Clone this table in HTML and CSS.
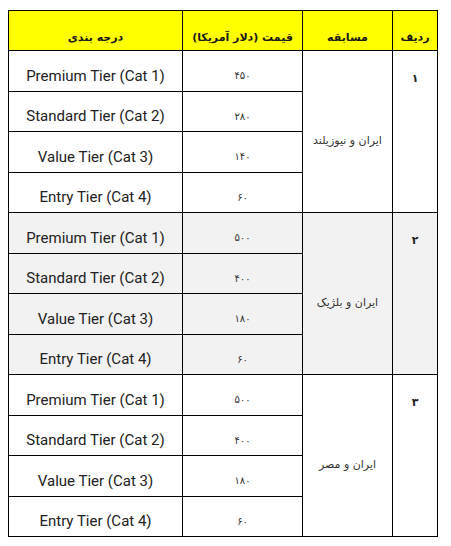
FILE: index.html
```html
<!DOCTYPE html>
<html lang="fa" dir="rtl">
<head>
<meta charset="utf-8">
<title>جدول قیمت بلیت</title>
<link rel="stylesheet" href="styles.css">
</head>
<body>
<table class="prices">
  <colgroup>
    <col class="c-row">
    <col class="c-match">
    <col class="c-price">
    <col class="c-tier">
  </colgroup>
  <thead>
    <tr class="head">
      <th>ردیف</th>
      <th>مسابقه</th>
      <th>قیمت (دلار آمریکا)</th>
      <th>درجه بندی</th>
    </tr>
  </thead>
  <tbody>
    <tr>
      <td class="num" rowspan="4">۱</td>
      <td class="match" rowspan="4">ایران و نیوزیلند</td>
      <td class="price">۴۵۰</td>
      <td class="tier">Premium Tier (Cat 1)</td>
    </tr>
    <tr><td class="price">۲۸۰</td><td class="tier">Standard Tier (Cat 2)</td></tr>
    <tr><td class="price">۱۴۰</td><td class="tier">Value Tier (Cat 3)</td></tr>
    <tr><td class="price">۶۰</td><td class="tier">Entry Tier (Cat 4)</td></tr>
  </tbody>
  <tbody class="alt">
    <tr>
      <td class="num" rowspan="4">۲</td>
      <td class="match" rowspan="4">ایران و بلژیک</td>
      <td class="price">۵۰۰</td>
      <td class="tier">Premium Tier (Cat 1)</td>
    </tr>
    <tr><td class="price">۴۰۰</td><td class="tier">Standard Tier (Cat 2)</td></tr>
    <tr><td class="price">۱۸۰</td><td class="tier">Value Tier (Cat 3)</td></tr>
    <tr><td class="price">۶۰</td><td class="tier">Entry Tier (Cat 4)</td></tr>
  </tbody>
  <tbody>
    <tr>
      <td class="num" rowspan="4">۳</td>
      <td class="match" rowspan="4">ایران و مصر</td>
      <td class="price">۵۰۰</td>
      <td class="tier">Premium Tier (Cat 1)</td>
    </tr>
    <tr><td class="price">۴۰۰</td><td class="tier">Standard Tier (Cat 2)</td></tr>
    <tr><td class="price">۱۸۰</td><td class="tier">Value Tier (Cat 3)</td></tr>
    <tr><td class="price">۶۰</td><td class="tier">Entry Tier (Cat 4)</td></tr>
  </tbody>
</table>
</body>
</html>
```

FILE: styles.css
```css
html, body {
  margin: 0;
  padding: 0;
  background: #ffffff;
}

body {
  padding: 10px 13px 0 9px;
  font-family: "DejaVu Sans", "Noto Sans", sans-serif;
  color: #222222;
}

.prices {
  border-collapse: collapse;
  table-layout: fixed;
  width: 429px;
}

.c-row { width: 45px; }
.c-match { width: 90px; }
.c-price { width: 120px; }
.c-tier { width: 174px; }

.prices th,
.prices td {
  border: 1px solid #000000;
  padding: 0;
  text-align: center;
}

.prices .head th {
  height: 40px;
  background: #ffff00;
  font-size: 11px;
  font-weight: bold;
  color: #1a1a1a;
  vertical-align: bottom;
  padding-bottom: 6px;
  box-sizing: border-box;
}

.prices tbody tr {
  height: 40.5px;
}

.prices .alt td {
  background: #f2f2f2;
}

.prices .tier {
  font-family: Roboto, "Liberation Sans", sans-serif;
  font-size: 15px;
  color: #222222;
  vertical-align: middle;
  padding-top: 10px;
}

.prices .price {
  font-size: 10px;
  color: #333333;
  vertical-align: middle;
  padding-top: 10px;
}

.prices .num {
  font-size: 11px;
  font-weight: bold;
  color: #222222;
  vertical-align: top;
  padding-top: 21px;
}

.prices .match {
  font-size: 11px;
  color: #333333;
  vertical-align: middle;
  padding-top: 18px;
}
```
